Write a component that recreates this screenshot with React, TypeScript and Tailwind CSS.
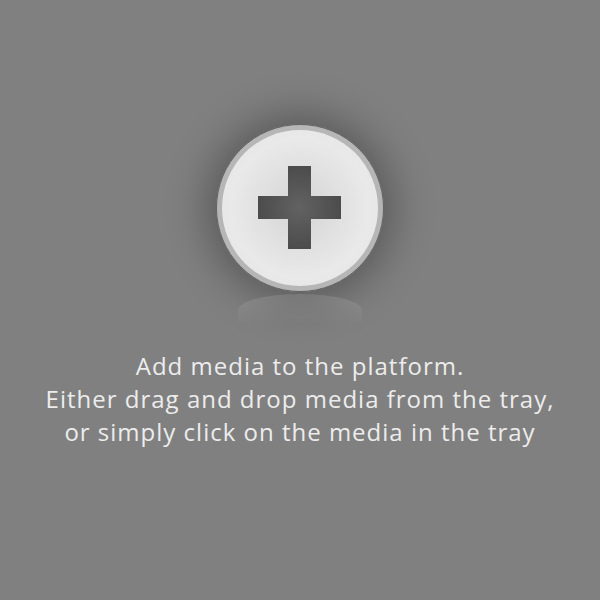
export default function App() {
  return (
    <div className="w-[600px] h-[600px] bg-[#808080] flex flex-col items-center pt-[124px]">
      <div className="relative w-[168px] h-[168px]">
        <div className="absolute inset-0 rounded-full shadow-[0_0_40px_10px_rgba(0,0,0,0.3)]" />
        <div className="relative w-[168px] h-[168px] rounded-full bg-[#b6b6b6] border border-[#626262] p-[5px]">
          <div className="w-full h-full rounded-full bg-[radial-gradient(circle,#d4d4d4_0%,#e0e0e0_35%,#e9e9e9_62%,#e4e4e4_100%)] flex items-center justify-center">
            <svg width="84" height="84" viewBox="0 0 84 84">
              <defs>
                <radialGradient id="pg" cx="50%" cy="50%" r="50%">
                  <stop offset="0%" stopColor="#626262" />
                  <stop offset="100%" stopColor="#4c4c4c" />
                </radialGradient>
              </defs>
              <path d="M30 0 H53 V30 H83 V53 H53 V83 H30 V53 H0 V30 H30 Z" fill="url(#pg)" />
            </svg>
          </div>
        </div>
      </div>
      <div className="w-[124px] h-[32px] mt-[2px] rounded-t-[50%] bg-[linear-gradient(to_bottom,rgba(255,255,255,0.16)_0%,rgba(255,255,255,0.06)_55%,rgba(255,255,255,0)_100%)]" />
      <div className="mt-[23px] text-center text-[#ececec] text-[24px] leading-[33px] tracking-[1px] font-medium font-['Open_Sans',sans-serif]">
        <div>Add media to the platform.</div>
        <div>Either drag and drop media from the tray,</div>
        <div>or simply click on the media in the tray</div>
      </div>
    </div>
  );
}
